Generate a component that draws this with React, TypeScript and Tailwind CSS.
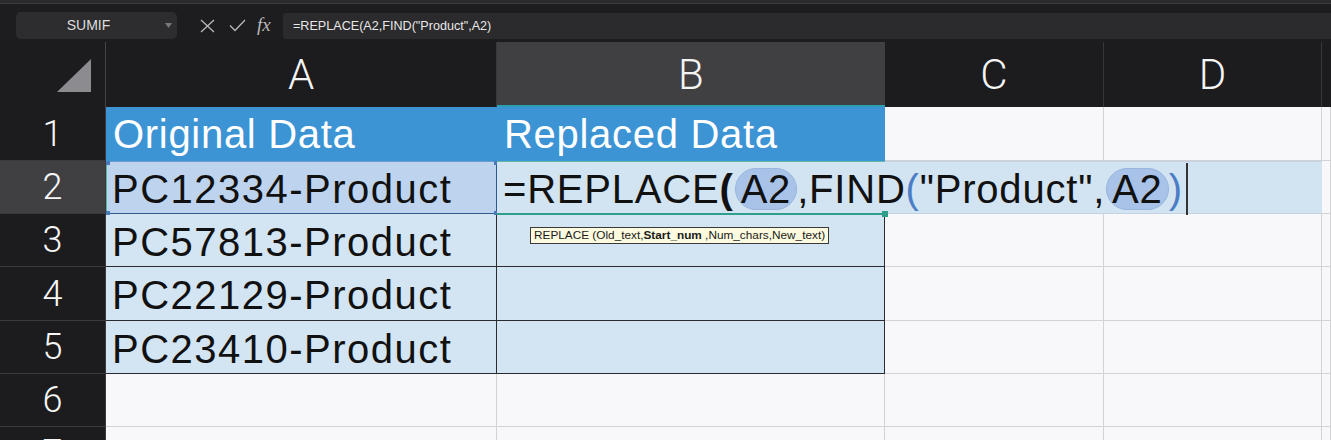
import React from "react";

const HEAD = "bg-[#1c1b1d] border-r border-[#38373a] flex items-center justify-center text-[#f4f4f4] font-['Roboto',sans-serif] font-light";
const BLANK = "bg-[#f8f7f9] border-r border-b border-[#d3d3d6]";
const DATA = "bg-[#d3e4f2] border-r border-b border-[#2c2c30] flex items-center pl-[6px] pt-[3px] text-[40px] tracking-[1.5px] text-[#111] whitespace-nowrap";

function RowHead({ n, active }: { n: number; active?: boolean }) {
  return (
    <div
      className={
        (active ? "bg-[#403f42] " : "bg-[#1c1b1d] ") +
        "border-b border-r border-[#3a393c] flex items-center justify-center text-[36px] text-[#f6f6f6] font-['Roboto',sans-serif] font-light"
      }
    >
      {n}
    </div>
  );
}

function Pill({ children }: { children: React.ReactNode }) {
  return (
    <span className="inline-flex items-center h-[42px] px-[5px] rounded-[21px] bg-[#a8c3e7] border border-[#98b6de]">
      {children}
    </span>
  );
}

export default function App() {
  return (
    <div className="w-[1331px] h-[440px] overflow-hidden bg-[#1d1c1e] font-['Liberation_Sans',Arial,sans-serif]">
      {/* top strip */}
      <div className="h-[4px] bg-[#2b2a2c] border-b border-[#3b3a3d]" />
      {/* formula bar */}
      <div className="h-[38px] flex items-start pt-[8px]">
        <div className="relative ml-[16px] w-[161px] h-[27px] rounded-[5px] bg-[#2d2c2f] flex items-center justify-center pr-[16px] text-[14px] text-[#dedede]">
          SUMIF
          <svg className="absolute right-[5px] top-[11px]" width="7" height="5" viewBox="0 0 7 5">
            <path d="M0 0 L7 0 L3.5 5 Z" fill="#77767a" />
          </svg>
        </div>
        <div className="w-[106px] h-[27px] flex items-center">
          <svg className="ml-[23px]" width="15" height="14" viewBox="0 0 15 14">
            <path d="M1 1 L14 13 M14 1 L1 13" stroke="#b9b8bc" strokeWidth="1.3" fill="none" />
          </svg>
          <svg className="ml-[14px]" width="17" height="13" viewBox="0 0 17 13">
            <path d="M1 6.5 L6 11.5 L16 1" stroke="#b9b8bc" strokeWidth="1.3" fill="none" />
          </svg>
          <span className="ml-[11px] text-[19px] italic text-[#b9b8bc] font-['Liberation_Serif',serif] leading-none -mt-[3px]">
            fx
          </span>
        </div>
        <div className="flex-1 h-[26px] mt-[1px] bg-[#2b2a2d] rounded-l-[3px] flex items-center pl-[10px] text-[12.6px] text-[#e8e8e8]">
          =REPLACE(A2,FIND("Product",A2)
        </div>
      </div>

      {/* grid */}
      <div className="grid grid-cols-[106px_391px_388px_219px_218px_9px] grid-rows-[65px_54px_53px_53px_54px_53px_53px_53px]">
        {/* header row */}
        <div className="bg-[#1c1b1d] border-r border-[#444346] relative">
          <svg className="absolute left-0 top-0" width="106" height="65" viewBox="0 0 106 65">
            <path d="M57 50 L91 50 L91 17 Z" fill="#8c8b8f" />
          </svg>
        </div>
        <div className={HEAD + " text-[42px]"}>A</div>
        <div className="bg-[#403f42] border-b-[2px] border-[#2aa0b6] flex items-center justify-center pt-[2px] text-[42px] text-[#f4f4f4] font-['Roboto',sans-serif] font-light">
          B
        </div>
        <div className={HEAD + " text-[42px]"}>C</div>
        <div className={HEAD + " text-[42px]"}>D</div>
        <div className="bg-[#1c1b1d]" />

        {/* row 1 */}
        <RowHead n={1} />
        <div className="bg-[#3c94d5] flex items-center pl-[7px] text-[40px] tracking-[0.7px] text-white whitespace-nowrap">
          Original Data
        </div>
        <div className="bg-[#3c94d5] flex items-center pl-[7px] text-[40px] tracking-[0.7px] text-white whitespace-nowrap">
          Replaced Data
        </div>
        <div className={BLANK} />
        <div className={BLANK} />
        <div className={BLANK} />

        {/* row 2 */}
        <RowHead n={2} active />
        <div className="relative bg-[#bed4ee] border-b border-r border-[#2f5a8f] flex items-center pl-[6px] pt-[3px] text-[40px] tracking-[1.5px] text-[#111] whitespace-nowrap">
          PC12334-Product
          <div className="absolute left-0 top-0 bottom-0 w-[1px] bg-[#4fb59e]" />
          <div className="absolute left-0 right-0 top-0 h-[1px] bg-[#6d9bd0]" />
          <div className="absolute left-0 top-0 w-[4px] h-[4px] bg-[#4a7bb8]" />
          <div className="absolute right-[-2px] top-0 w-[4px] h-[4px] bg-[#4a7bb8]" />
          <div className="absolute right-[-2px] bottom-[-2px] w-[4px] h-[4px] bg-[#4a7bb8]" />
          <div className="absolute left-0 bottom-[-2px] w-[4px] h-[4px] bg-[#4a7bb8]" />
        </div>
        <div className="relative bg-[#d2e3f2]">
          <div className="absolute left-0 top-0 bottom-0 w-[825px] z-10 bg-[#d2e3f2] border-y border-[#c3d3e3] flex items-center pl-[6px] pt-[2px] text-[40px] tracking-[0.8px] text-[#111] whitespace-nowrap">
            <span>=REPLACE</span>
            <span className="font-bold">(</span>
            <span className="ml-[1px]"><Pill>A2</Pill></span>
            <span>,FIND</span>
            <span className="text-[#4a7dc6]">(</span>
            <span>"Product",</span>
            <span className="ml-[1px]"><Pill>A2</Pill></span>
            <span className="text-[#4a7dc6]">)</span>
            <span className="ml-[3px] w-[2px] h-[52px] bg-[#333]" />
          </div>
          <div className="absolute left-0 w-[388px] top-0 h-[1px] bg-[#5fb7a4] z-20" />
          <div className="absolute left-0 w-[388px] bottom-[-1px] h-[2px] bg-[#2d9f8a] z-20" />
          <div className="absolute left-[385px] bottom-[-3px] w-[6px] h-[6px] bg-[#2d9f8a] z-20" />
        </div>
        <div className="bg-[#d2e3f2]" />
        <div className="bg-[#d2e3f2]" />
        <div className={BLANK} />

        {/* row 3 */}
        <RowHead n={3} />
        <div className={DATA}>PC57813-Product</div>
        <div className={DATA + " relative"}>
          <div className="absolute left-[33px] top-[13px] z-20 h-[17px] px-[3px] bg-[#fdfbdf] border border-[#3a3a3a] flex items-center text-[11.8px] tracking-normal text-[#1a1a1a] leading-none">
            REPLACE (Old_text,<span className="font-bold">Start_num</span>&nbsp;,Num_chars,New_text)
          </div>
        </div>
        <div className={BLANK} />
        <div className={BLANK} />
        <div className={BLANK} />

        {/* row 4 */}
        <RowHead n={4} />
        <div className={DATA}>PC22129-Product</div>
        <div className={DATA} />
        <div className={BLANK} />
        <div className={BLANK} />
        <div className={BLANK} />

        {/* row 5 */}
        <RowHead n={5} />
        <div className={DATA}>PC23410-Product</div>
        <div className={DATA} />
        <div className={BLANK} />
        <div className={BLANK} />
        <div className={BLANK} />

        {/* row 6 */}
        <RowHead n={6} />
        <div className={BLANK} />
        <div className={BLANK} />
        <div className={BLANK} />
        <div className={BLANK} />
        <div className={BLANK} />

        {/* row 7 */}
        <RowHead n={7} />
        <div className={BLANK} />
        <div className={BLANK} />
        <div className={BLANK} />
        <div className={BLANK} />
        <div className={BLANK} />
      </div>
    </div>
  );
}
